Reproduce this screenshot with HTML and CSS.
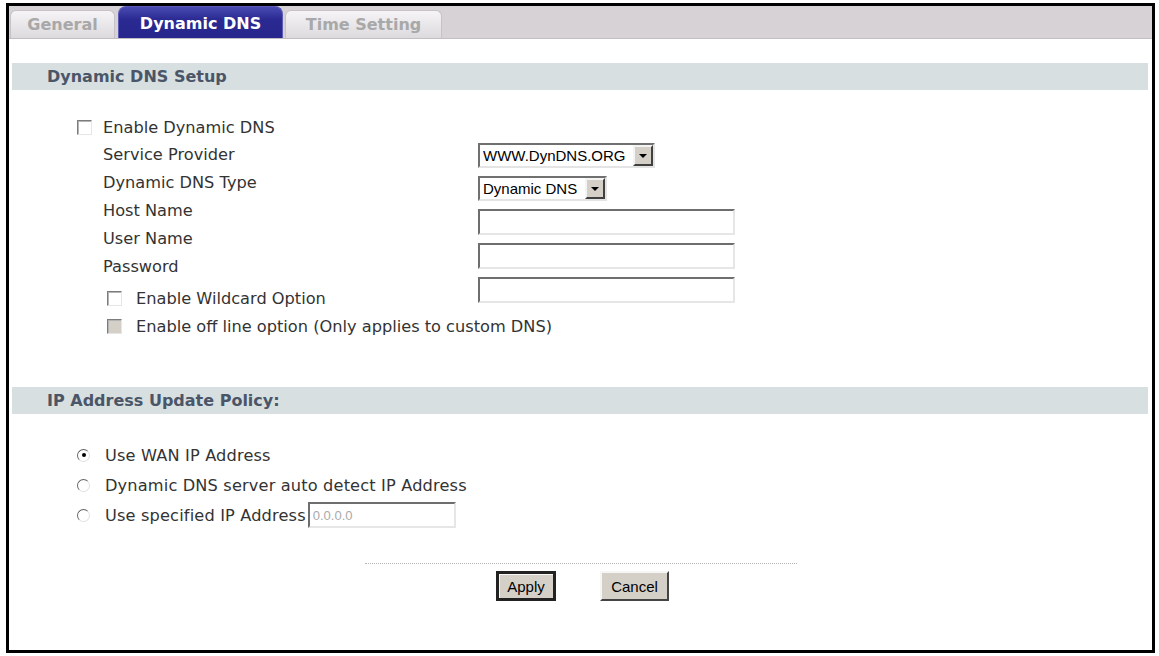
FILE: index.html
```html
<!DOCTYPE html>
<html lang="en">
<head>
    <meta charset="UTF-8">
    <title>Dynamic DNS</title>
    <link rel="stylesheet" href="styles.css">
</head>
<body>
    <div class="frame">
        <div class="tabbar">
            <div class="tab">General</div>
            <div class="tab active">Dynamic DNS</div>
            <div class="tab">Time Setting</div>
        </div>

        <div class="content">
            <div class="section-head">Dynamic DNS Setup</div>

            <div class="setup">
                <div class="labels">
                    <label class="check-row top"><span class="checkbox"></span>Enable Dynamic DNS</label>
                    <div class="field-label">Service Provider</div>
                    <div class="field-label">Dynamic DNS Type</div>
                    <div class="field-label">Host Name</div>
                    <div class="field-label">User Name</div>
                    <div class="field-label">Password</div>
                    <label class="check-row sub first"><span class="checkbox"></span>Enable Wildcard Option</label>
                    <label class="check-row sub"><span class="checkbox disabled"></span>Enable off line option (Only applies to custom DNS)</label>
                </div>

                <div class="controls">
                    <div class="select provider">
                        <select><option>WWW.DynDNS.ORG</option></select>
                        <span class="arrow"></span>
                    </div>
                    <div class="select ddns-type">
                        <select><option>Dynamic DNS</option></select>
                        <span class="arrow"></span>
                    </div>
                    <input type="text" class="text-input">
                    <input type="text" class="text-input">
                    <input type="password" class="text-input">
                </div>
            </div>

            <div class="section-head second">IP Address Update Policy:</div>

            <div class="policy">
                <label class="radio-row"><span class="radio checked"></span>Use WAN IP Address</label>
                <label class="radio-row"><span class="radio"></span>Dynamic DNS server auto detect IP Address</label>
                <label class="radio-row"><span class="radio"></span>Use specified IP Address<input type="text" class="text-input ip" value="0.0.0.0" disabled></label>
            </div>

            <div class="actions">
                <div class="rule"></div>
                <div class="buttons">
                    <button class="btn default">Apply</button>
                    <button class="btn">Cancel</button>
                </div>
            </div>
        </div>
    </div>
</body>
</html>
```

FILE: styles.css
```css
body {
    margin: 3px 4px 3px 6px;
    background-color: white;
    font-family: "DejaVu Sans", Verdana, sans-serif;
    font-size: 16.2px;
    color: #333;
}
.frame {
    box-sizing: border-box;
    height: 650px;
    border: 3px solid #000;
    background-color: #fff;
}

/* tabs */
.tabbar {
    display: flex;
    align-items: flex-end;
    height: 32px;
    padding-left: 1px;
    background-color: #d6d2d6;
    border-bottom: 1px solid #c2bec2;
}
.tab {
    box-sizing: border-box;
    height: 28px;
    margin-right: 3px;
    padding-top: 4px;
    border: 1px solid #c6c2c6;
    border-bottom: none;
    border-radius: 6px 6px 0 0;
    background: linear-gradient(#f6f4f6, #dddadd);
    color: #a8a8a8;
    font-size: 16px;
    font-weight: bold;
    text-align: center;
    width: 105px;
}
.tab.active {
    height: 32px;
    width: 165px;
    padding-top: 7px;
    border-color: #5a5ab8;
    border-radius: 8px 8px 0 0;
    background: linear-gradient(#4a4ab4, #2a2a92 40%, #26268c);
    color: #fff;
    margin-right: 2px;
}
.tab:last-child {
    width: 157px;
}

/* sections */
.section-head {
    height: 27px;
    line-height: 27px;
    margin: 24px 4px 0 3px;
    padding-left: 35px;
    background-color: #d8dfe0;
    color: #4a5668;
    font-size: 16px;
    font-weight: bold;
}
.section-head.second {
    margin-top: 47px;
}

.setup {
    display: flex;
    padding-left: 68px;
}
.labels {
    flex: 0 0 401px;
    min-width: 0;
    padding-top: 23px;
    white-space: nowrap;
}
.check-row {
    display: flex;
    align-items: center;
    height: 28px;
}
.check-row .checkbox {
    margin-right: 11px;
}
.check-row.sub {
    padding-left: 30px;
}
.check-row.sub .checkbox {
    margin-right: 14px;
}
.check-row.first {
    margin-top: 3px;
}
.field-label {
    height: 28px;
    line-height: 28px;
    padding-left: 26px;
}

.checkbox {
    flex: none;
    box-sizing: border-box;
    width: 15px;
    height: 15px;
    border: 1px solid;
    border-color: #7c7c7c #e6e6e6 #e6e6e6 #7c7c7c;
    box-shadow: inset 1px 1px 0 #b4b4b4;
    background-color: #fff;
}
.checkbox.disabled {
    background-color: #d4d0c8;
}

.controls {
    display: flex;
    flex-direction: column;
    align-items: flex-start;
    gap: 8px;
    padding-top: 53px;
}
.select {
    box-sizing: border-box;
    display: flex;
    height: 25px;
    border: 2px solid;
    border-color: #707070 #e4e4e4 #e4e4e4 #707070;
    background-color: #fff;
}
.select select {
    flex: 1;
    appearance: none;
    border: none;
    background: transparent;
    padding: 0 0 0 3px;
    font-family: "Liberation Sans", Arial, sans-serif;
    font-size: 15px;
    color: #000;
}
.select .arrow {
    box-sizing: border-box;
    width: 20px;
    border: 2px solid;
    border-color: #f4f4f4 #404040 #404040 #f4f4f4;
    background-color: #d4d0c8;
    display: flex;
    align-items: center;
    justify-content: center;
}
.select .arrow::after {
    content: "";
    border-left: 4px solid transparent;
    border-right: 4px solid transparent;
    border-top: 4px solid #000;
}
.select.provider {
    width: 177px;
}
.select.ddns-type {
    width: 129px;
}
.text-input {
    box-sizing: border-box;
    width: 257px;
    height: 26px;
    border: 2px solid;
    border-color: #6e6e6e #e6e6e6 #e6e6e6 #6e6e6e;
    background-color: #fff;
    padding: 0 3px;
    font-family: "Liberation Sans", Arial, sans-serif;
    font-size: 14px;
}

/* update policy */
.policy {
    padding: 26px 0 0 68px;
}
.radio-row {
    display: flex;
    align-items: center;
    height: 30px;
    letter-spacing: 0.15px;
}
.radio {
    flex: none;
    box-sizing: border-box;
    position: relative;
    width: 13px;
    height: 13px;
    margin-right: 15px;
    border: 1px solid;
    border-color: #666 #e0e0e0 #e0e0e0 #666;
    border-radius: 50%;
    background-color: #fff;
}
.radio.checked::after {
    content: "";
    position: absolute;
    left: 3.5px;
    top: 3.5px;
    width: 4px;
    height: 4px;
    border-radius: 50%;
    background-color: #000;
}
.text-input.ip {
    width: 148px;
    margin-left: 2px;
    color: #aaa;
    font-size: 13px;
    letter-spacing: 0;
}

/* buttons */
.actions {
    display: flex;
    flex-direction: column;
    align-items: center;
    margin-top: 33px;
}
.rule {
    width: 432px;
    border-top: 1px dotted #b4b4b4;
}
.buttons {
    display: flex;
    gap: 44px;
    margin-top: 7px;
    padding-left: 4px;
}
.btn {
    box-sizing: border-box;
    height: 30px;
    width: 69px;
    border: 2px solid;
    border-color: #f6f6f6 #444 #444 #f6f6f6;
    background-color: #d4d0c8;
    font-family: "Liberation Sans", Arial, sans-serif;
    font-size: 15px;
    color: #000;
    padding: 0;
}
.btn.default {
    width: 60px;
    border: 3px solid #222;
    box-shadow: inset 1px 1px 0 #f6f6f6;
}
```
